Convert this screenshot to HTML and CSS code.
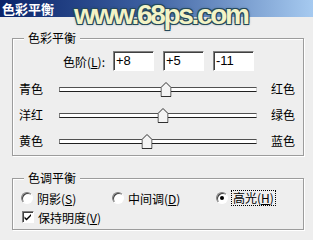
FILE: index.html
```html
<!DOCTYPE html>
<html lang="zh">
<head>
<meta charset="utf-8">
<title>色彩平衡</title>
<link rel="stylesheet" href="styles.css">
</head>
<body>
<div class="window">
  <div class="titlebar">色彩平衡</div>
  <div class="watermark">www.68ps.com</div>
  <div class="dialog">
    <div class="group group-color">
      <div class="legend">色彩平衡</div>
      <div class="levels">
        <span class="levels-label">色阶(<u>L</u>):</span>
        <div class="inputs">
          <div class="field">+8</div>
          <div class="field">+5</div>
          <div class="field">-11</div>
        </div>
      </div>
      <div class="slider-row">
        <span class="side">青色</span>
        <div class="track"><svg class="thumb" style="left: calc(50% + 4%)" width="11" height="15" viewBox="0 0 11 15"><path d="M0.5 5.5 L5.5 0.5 L10.5 5.5 L10.5 14.5 L0.5 14.5 Z" fill="#f4f4f4" stroke="#303030"/></svg></div>
        <span class="side">红色</span>
      </div>
      <div class="slider-row">
        <span class="side">洋红</span>
        <div class="track"><svg class="thumb" style="left: calc(50% + 2.5%)" width="11" height="15" viewBox="0 0 11 15"><path d="M0.5 5.5 L5.5 0.5 L10.5 5.5 L10.5 14.5 L0.5 14.5 Z" fill="#f4f4f4" stroke="#303030"/></svg></div>
        <span class="side">绿色</span>
      </div>
      <div class="slider-row">
        <span class="side">黄色</span>
        <div class="track"><svg class="thumb" style="left: calc(50% - 5.5%)" width="11" height="15" viewBox="0 0 11 15"><path d="M0.5 5.5 L5.5 0.5 L10.5 5.5 L10.5 14.5 L0.5 14.5 Z" fill="#f4f4f4" stroke="#303030"/></svg></div>
        <span class="side">蓝色</span>
      </div>
    </div>

    <div class="group group-tone">
      <div class="legend">色调平衡</div>
      <div class="radio-row">
        <div class="option opt-1"><span class="radio"></span><span>阴影(<u>S</u>)</span></div>
        <div class="option opt-2"><span class="radio"></span><span>中间调(<u>D</u>)</span></div>
        <div class="option"><span class="radio checked"></span><span class="focus">高光(<u>H</u>)</span></div>
      </div>
      <div class="check-row">
        <span class="checkbox"><svg width="10" height="10" viewBox="0 0 10 10"><path d="M1.5 4.5 L3.5 6.5 L8 2 L8 4 L3.5 8.5 L1.5 6.5 Z" fill="#000"/></svg></span>
        <span>保持明度(<u>V</u>)</span>
      </div>
    </div>
  </div>
</div>
</body>
</html>
```

FILE: styles.css
```css
* { box-sizing: border-box; }
html, body {
  margin: 0;
  padding: 0;
  background: #eeeeee;
}
body {
  font-family: "Noto Sans CJK SC", "Noto Sans", sans-serif;
  font-size: 12px;
  color: #000;
}
.window {
  position: relative;
  width: 313px;
  height: 240px;
  overflow: hidden;
}
.titlebar {
  height: 17px;
  line-height: 17px;
  padding-left: 2px;
  color: #fff;
  font-weight: bold;
  font-size: 13px;
  background: linear-gradient(to right, #0a246a 0%, #3a5d9e 45%, #a6caf0 100%);
}
.watermark {
  position: absolute;
  left: 74px;
  top: 1px;
  font-family: "Liberation Sans", Arial, sans-serif;
  font-weight: bold;
  font-size: 28px;
  line-height: 28px;
  letter-spacing: -2.3px;
  color: #f3f3c6;
  text-shadow:
    -1px -1px 0 #25495b, 1px -1px 0 #25495b,
    -1px 1px 0 #25495b, 1px 1px 0 #25495b,
    0 0 3px #1e3f52;
}
.dialog {
  padding: 21px 9px 0 12px;
}
.group {
  position: relative;
  border: 1px solid #9c9c9c;
  box-shadow: 1px 1px 0 #fff, inset 1px 1px 0 #fff;
}
.group-color {
  height: 118px;
  padding-top: 12px;
}
.group-tone {
  margin-top: 22px;
  height: 52px;
  padding: 11px 0 0 8px;
}
.legend {
  position: absolute;
  top: -8px;
  left: 11px;
  padding: 0 4px;
  line-height: 14px;
  background: #eeeeee;
}
.levels {
  display: flex;
  align-items: center;
  height: 20px;
}
.levels-label {
  width: 92px;
  text-align: right;
}
.inputs {
  display: flex;
  gap: 9px;
  margin-left: 8px;
}
.field {
  width: 41px;
  height: 20px;
  background: #fff;
  border: 1px solid;
  border-color: #808080 #ffffff #ffffff #808080;
  box-shadow: inset 1px 1px 0 #404040;
  padding: 1px 0 0 2px;
  font-family: "Liberation Sans", Arial, sans-serif;
  font-size: 13px;
  line-height: 16px;
}
.levels + .slider-row { margin-top: 5px; }
.slider-row {
  display: flex;
  align-items: center;
  height: 26px;
  padding-left: 6px;
}
.side {
  width: 24px;
  line-height: 14px;
}
.track {
  position: relative;
  width: 198px;
  height: 5px;
  margin: 0 14px 0 16px;
  background: #fff;
  border-top: 1px solid #505050;
  border-bottom: 1px solid #202020;
  border-left: 1px solid #808080;
  border-right: 1px solid #d0d0d0;
}
.thumb {
  position: absolute;
  top: -6px;
  transform: translateX(-50%);
  display: block;
}
.radio-row {
  display: flex;
  align-items: center;
  height: 16px;
}
.option {
  display: flex;
  align-items: center;
  gap: 4px;
}
.opt-1 { width: 91px; }
.opt-2 { width: 104px; }
.radio {
  position: relative;
  width: 12px;
  height: 12px;
  border-radius: 50%;
  background: #fff;
  border: 1px solid;
  border-color: #808080 #ffffff #ffffff #808080;
  box-shadow: inset 1px 1px 0 #404040;
}
.radio.checked::after {
  content: "";
  position: absolute;
  left: 3px;
  top: 3px;
  width: 4px;
  height: 4px;
  border-radius: 50%;
  background: #000;
}
.focus {
  outline: 1px dotted #000;
  outline-offset: 0;
  padding: 0 1px;
  line-height: 14px;
}
.check-row {
  display: flex;
  align-items: center;
  gap: 4px;
  height: 16px;
  margin-top: 3px;
  padding-left: 1px;
}
.checkbox {
  display: flex;
  align-items: center;
  justify-content: center;
  width: 12px;
  height: 12px;
  background: #fff;
  border: 1px solid;
  border-color: #808080 #ffffff #ffffff #808080;
  box-shadow: inset 1px 1px 0 #404040;
}
.checkbox svg { display: block; }
u { text-decoration: underline; }
```
